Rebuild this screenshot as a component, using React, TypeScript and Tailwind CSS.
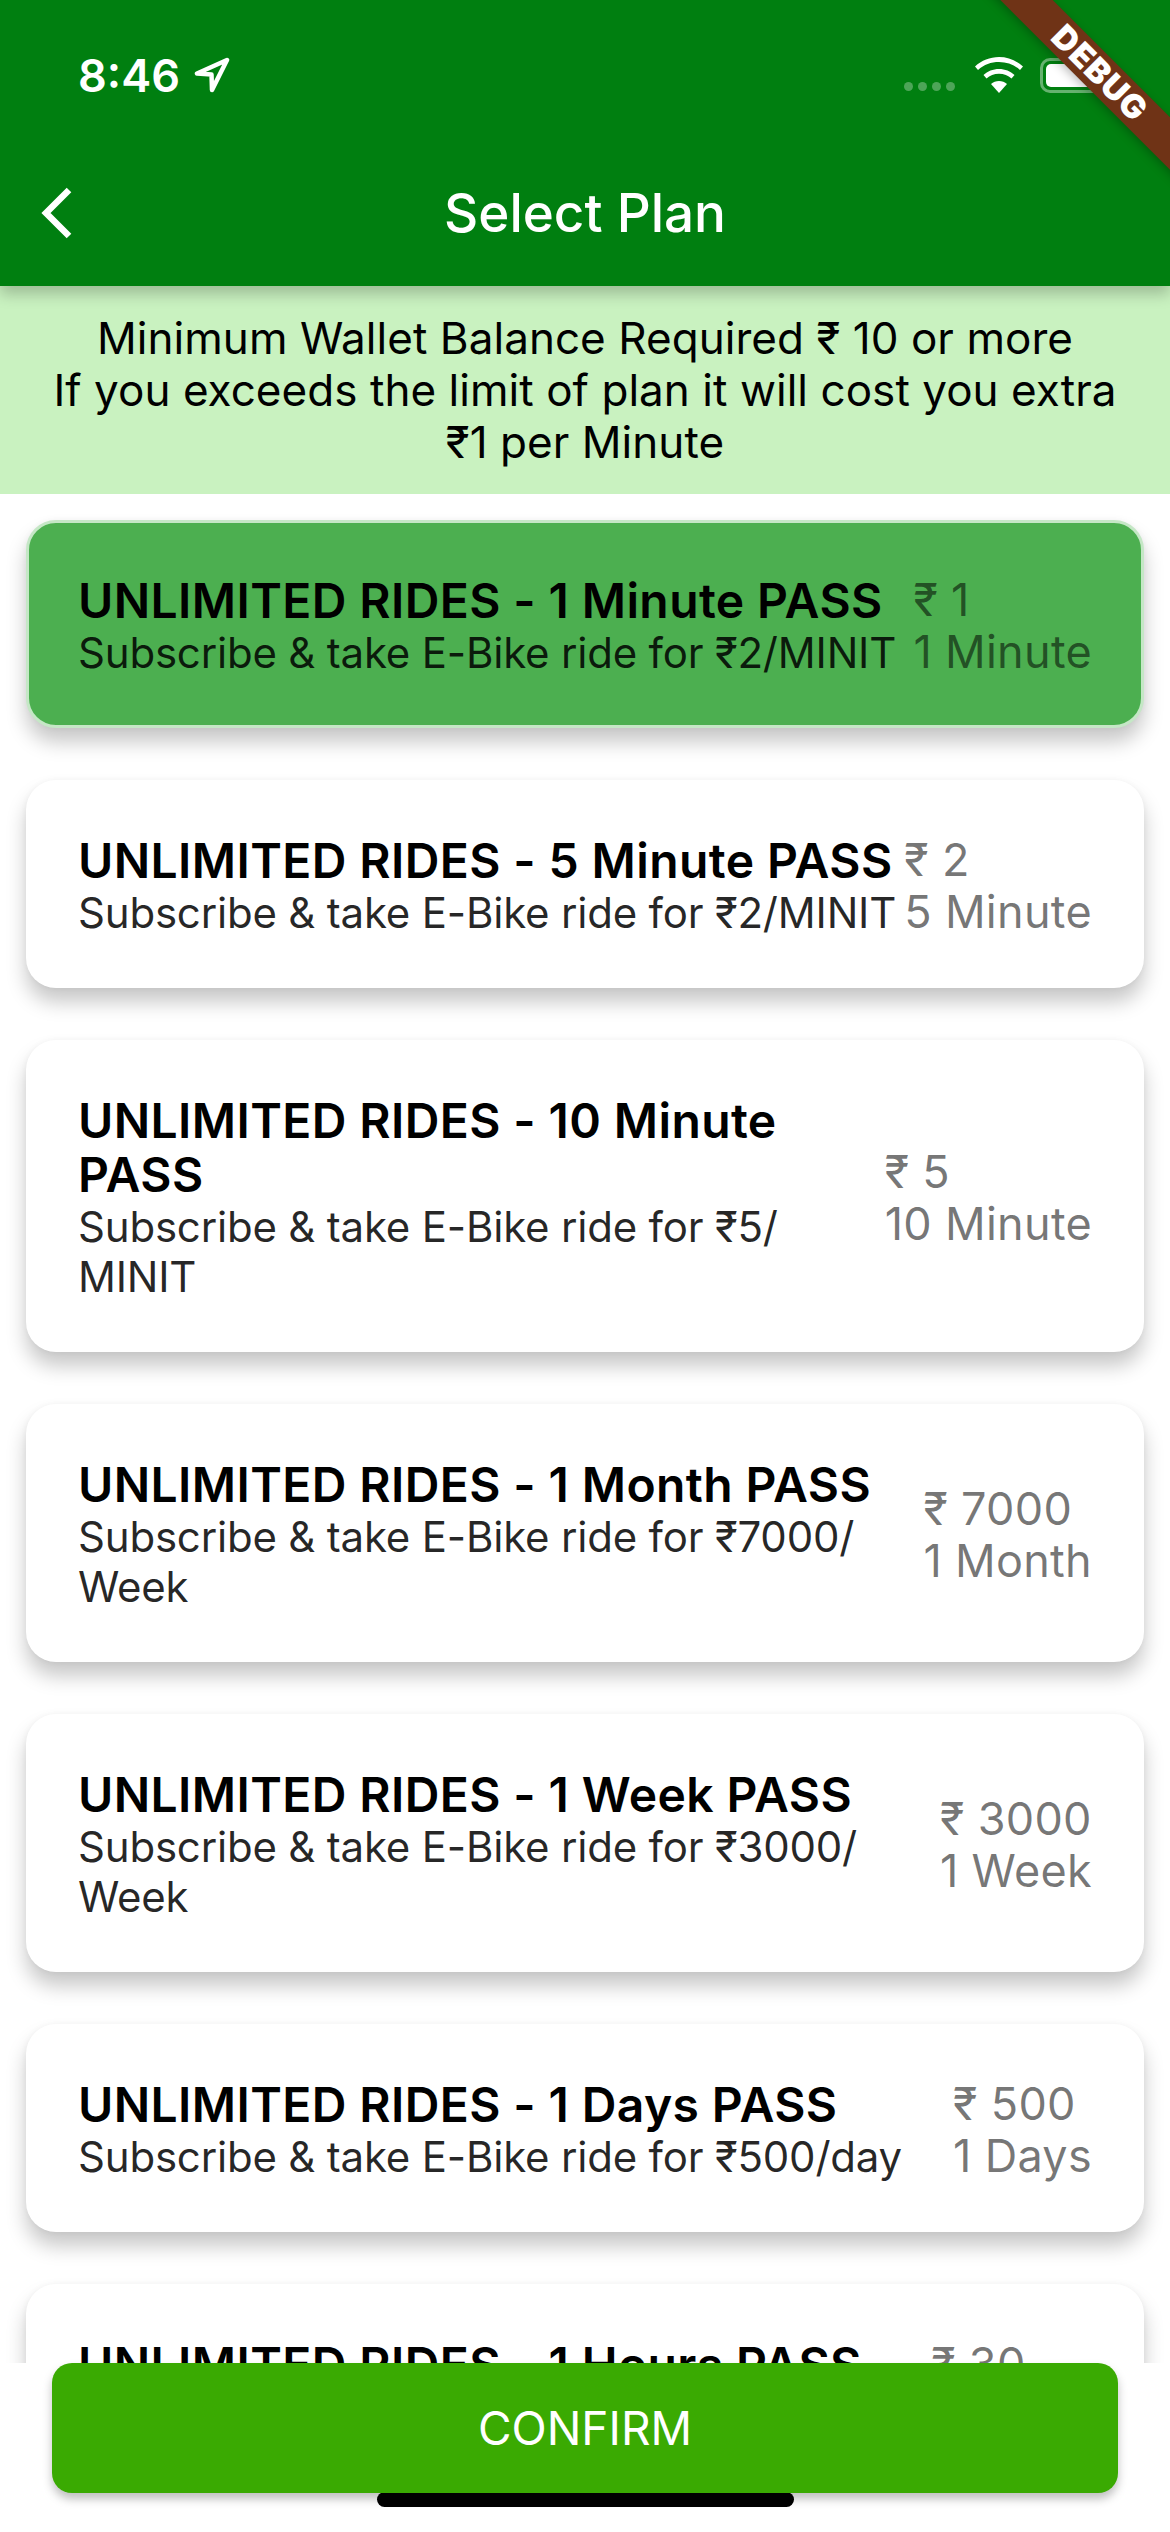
const plans = [
    { name: 'UNLIMITED RIDES - 1 Minute PASS', desc: 'Subscribe & take E-Bike ride for ₹2/\u200bMINIT', price: '₹ 1', period: '1 Minute', selected: true },
    { name: 'UNLIMITED RIDES - 5 Minute PASS', desc: 'Subscribe & take E-Bike ride for ₹2/\u200bMINIT', price: '₹ 2', period: '5 Minute' },
    { name: 'UNLIMITED RIDES - 10 Minute PASS', desc: 'Subscribe & take E-Bike ride for ₹5/\u200bMINIT', price: '₹ 5', period: '10 Minute' },
    { name: 'UNLIMITED RIDES - 1 Month PASS', desc: 'Subscribe & take E-Bike ride for ₹7000/\u200bWeek', price: '₹ 7000', period: '1 Month' },
    { name: 'UNLIMITED RIDES - 1 Week PASS', desc: 'Subscribe & take E-Bike ride for ₹3000/\u200bWeek', price: '₹ 3000', period: '1 Week' },
    { name: 'UNLIMITED RIDES - 1 Days PASS', desc: 'Subscribe & take E-Bike ride for ₹500/\u200bday', price: '₹ 500', period: '1 Days' },
    { name: 'UNLIMITED RIDES - 1 Hours PASS', desc: 'Subscribe & take E-Bike ride for ₹30/\u200bhour', price: '₹ 30', period: '1 Hours' },
];

function StatusBar() {
    return (
        <div className="relative z-30 flex h-[150px] items-center justify-between pl-[78px] pr-[60px] text-white">
            <div className="flex items-center gap-[14px]">
                <span className="text-[45px] font-semibold leading-none">8:46</span>
                <svg width="36" height="36" viewBox="0 0 36 36" fill="none" stroke="white" strokeWidth="4.500" strokeLinejoin="round">
                    <path d="M33 3 3 16.500l14.500 1L18 33z" />
                </svg>
            </div>
            <div className="flex items-center">
                <div className="mt-[22px] mr-[20px] flex gap-[5px]">
                    <span className="h-[9px] w-[9px] rounded-full bg-white/30" />
                    <span className="h-[9px] w-[9px] rounded-full bg-white/30" />
                    <span className="h-[9px] w-[9px] rounded-full bg-white/30" />
                    <span className="h-[9px] w-[9px] rounded-full bg-white/30" />
                </div>
                <svg width="48" height="36" viewBox="0 0 48 36" fill="white" className="mr-[17px]">
                    <path d="M24 0C15 0 6.500 3.500 0 9.500l3 3.500C9 7.500 16 5 24 5s15 2.500 21 8l3-3.500C41.500 3.500 33 0 24 0z" />
                    <path d="M24 12c-6 0-11.500 2.300-15.500 6l3 3.500c3.300-3 7.600-4.700 12.500-4.700s9.200 1.700 12.500 4.700l3-3.500C35.500 14.300 30 12 24 12z" />
                    <path d="M24 24c-3 0-5.800 1.100-8 3l8 9 8-9c-2.200-1.900-5-3-8-3z" />
                </svg>
                <div className="flex h-[35px] w-[70px] items-center rounded-[10px] border-[3px] border-white/40 p-[3px]">
                    <div className="h-full w-full rounded-[5px] bg-white" />
                </div>
            </div>
        </div>
    );
}

function DebugBanner() {
    return (
        <div className="absolute left-[947px] top-[52px] z-20 flex h-[37px] w-[300px] rotate-45 items-center justify-center bg-[#6f3316] pl-[8px] text-[33px] font-black tracking-[1px] text-white shadow-[0_3px_10px_rgba(0,0,0,0.25)]">
            DEBUG
        </div>
    );
}

function PlanCard({ plan }: { plan: (typeof plans)[number] }) {
    const look = plan.selected
        ? 'border-[3px] border-[#c5e7c6] bg-[#4caf50] px-[49px] pt-[51px] pb-[47px]'
        : 'bg-white px-[52px] pt-[54px] pb-[50px]';

    return (
        <div className={`flex shrink-0 items-center rounded-[30px] shadow-[0_14px_20px_rgba(0,0,0,0.22),0_0_6px_rgba(0,0,0,0.04)] ${look}`}>
            <div className="min-w-0 flex-1">
                <div className="text-[48px] font-semibold leading-[54px] tracking-[0.4px] text-black">{plan.name}</div>
                <div className="text-[42px] leading-[50px] tracking-[-0.2px] text-black/85">{plan.desc}</div>
            </div>
            <div className="shrink-0 text-[45px] leading-[52px] tracking-[0.3px] text-black/55">
                <div>{plan.price}</div>
                <div>{plan.period}</div>
            </div>
        </div>
    );
}

export default function App() {
    return (
        <div className="relative flex h-[2532px] w-[1170px] flex-col overflow-hidden bg-white font-['Inter',sans-serif]">
            <DebugBanner />

            <header className="relative z-10 h-[286px] shrink-0 bg-[#007f10] shadow-[0_8px_14px_rgba(0,0,0,0.22)]">
                <StatusBar />
                <div className="relative mt-[35px] flex h-[56px] items-center justify-center text-white">
                    <svg width="36" height="56" viewBox="0 0 36 56" fill="none" stroke="white" strokeWidth="6.500" className="absolute left-[40px] top-0">
                        <path d="M29 5 6 28l23 23" />
                    </svg>
                    <span className="text-[53px] font-medium leading-none">Select Plan</span>
                </div>
            </header>

            <div className="shrink-0 bg-[#c9f2c0] px-[40px] py-[26px] text-center text-[44px] leading-[52px] tracking-[0.05px] text-black">
                Minimum Wallet Balance Required ₹ 10 or more
                <br />
                If you exceeds the limit of plan it will cost you extra
                <br />
                ₹1 per Minute
            </div>

            <main className="flex min-h-0 flex-1 flex-col gap-[52px] overflow-hidden px-[26px] pt-[26px]">
                {plans.map((plan) => (
                    <PlanCard key={plan.name} plan={plan} />
                ))}
            </main>

            <footer className="relative z-10 h-[169px] shrink-0 bg-white px-[52px]">
                <div className="absolute bottom-[25px] left-[377px] h-[15px] w-[417px] rounded-full bg-black" />
                <button className="relative flex h-[130px] w-full items-center justify-center rounded-[20px] bg-[#3aaa02] text-[46px] text-white shadow-[0_6px_10px_rgba(0,0,0,0.25)]">
                    CONFIRM
                </button>
            </footer>
        </div>
    );
}
